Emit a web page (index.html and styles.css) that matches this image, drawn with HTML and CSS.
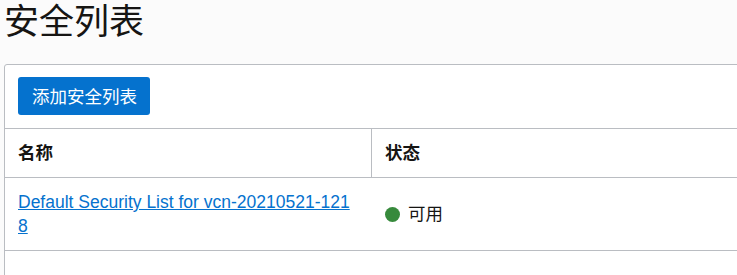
FILE: index.html
```html
<!DOCTYPE html>
<html lang="zh-CN">
<head>
<meta charset="utf-8">
<title>安全列表</title>
<link rel="stylesheet" href="styles.css">
</head>
<body>
<div class="page">
  <h1 class="title">安全列表</h1>
  <section class="card">
    <div class="toolbar">
      <button class="btn-primary" type="button">添加安全列表</button>
    </div>
    <div class="grid-row head-row">
      <div class="cell head-cell">名称</div>
      <div class="cell head-cell">状态</div>
    </div>
    <div class="grid-row data-row">
      <div class="cell name-cell"><a class="res-link" href="#">Default Security List for vcn-20210521-1218</a></div>
      <div class="cell status-cell"><span class="dot"></span><span>可用</span></div>
    </div>
  </section>
</div>
</body>
</html>
```
FILE: styles.css
```css
html, body {
  margin: 0;
  padding: 0;
  overflow: hidden;
}
body {
  background: #fbfbfb;
  color: #161513;
  font-family: "Liberation Sans", "Noto Sans CJK SC", sans-serif;
  font-size: 17.5px;
}
.page {
  padding: 0 4px;
}
.title {
  margin: 0 0 26px 0;
  font-family: "Noto Sans CJK SC", sans-serif;
  font-size: 35px;
  font-weight: 400;
  line-height: 38px;
  color: #161513;
}
.card {
  width: 760px;
  height: 212px;
  background: #ffffff;
  border: 1px solid #babdc2;
  border-radius: 3px 3px 0 0;
}
.toolbar {
  padding: 12px 13px 13px 13px;
  border-bottom: 1px solid #babdc2;
}
.btn-primary {
  display: inline-flex;
  align-items: center;
  height: 38px;
  padding: 0 13px 0 14px;
  border: none;
  border-radius: 3px;
  background: #0572ce;
  color: #ffffff;
  font-family: "Noto Sans CJK SC", sans-serif;
  font-size: 17.5px;
  line-height: 24px;
}
.grid-row {
  display: grid;
  grid-template-columns: 367px 1fr;
  border-bottom: 1px solid #babdc2;
}
.cell {
  box-sizing: border-box;
  padding: 12px 16px 12px 13px;
  line-height: 24px;
}
.head-cell {
  font-weight: 700;
}
.head-cell:first-child {
  border-right: 1px solid #babdc2;
}
.name-cell {
  word-break: break-all;
}
.res-link {
  color: #0572ce;
  text-decoration: underline;
}
.status-cell {
  display: flex;
  align-items: center;
  align-self: center;
  gap: 8px;
  padding-left: 13px;
}
.dot {
  width: 15px;
  height: 15px;
  border-radius: 50%;
  background: #378a3c;
  flex: none;
}
```
